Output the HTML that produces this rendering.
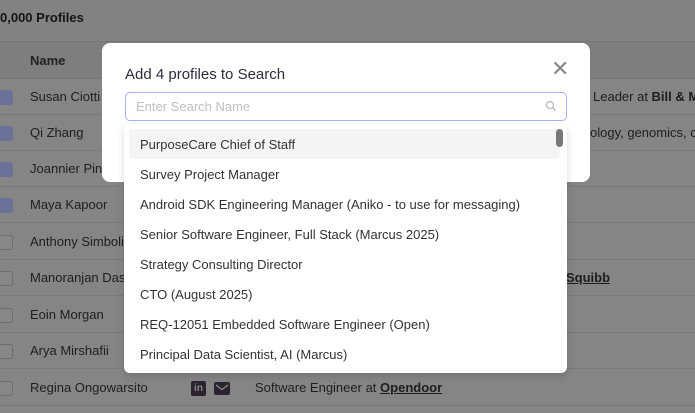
<!DOCTYPE html>
<html><head><style>
body{margin:0;width:695px;height:413px;overflow:hidden;background:#858585;font-family:"Liberation Sans",sans-serif;position:relative;color:#1c1c1c;white-space:nowrap}
.top{position:absolute;left:0;top:0;width:695px;height:41px;border-bottom:1px solid #767676;background:#828282}
.top span{position:absolute;left:0;top:10px;font-weight:bold;font-size:13px;color:#141414}
.hdr{position:absolute;left:0;top:42px;width:695px;height:36px;background:#7e7e7e;border-bottom:1px solid #777}
.hdr span{position:absolute;left:30px;top:11px;font-size:13px;font-weight:bold;color:#222}
.row{position:absolute;left:0;width:695px;height:35px;border-bottom:1px solid #7a7a7a}
.row .n{position:absolute;left:30px;top:10px;font-size:13px;color:#1e1e1e}
.cb{position:absolute;left:-2px;top:11px;width:13px;height:13px;border:1px solid #6d6d6d;border-radius:3px;background:#878787}
.cb.on{background:#6c7199;border-color:#6c7199}
.t{position:absolute;font-size:13px;color:#1e1e1e;top:10px}
.modal{position:absolute;left:102px;top:43px;width:488px;height:139px;background:#fff;border-radius:8px}
.modal h1{position:absolute;left:23px;top:23px;margin:0;font-size:15px;font-weight:normal;color:#2e2b3f}
.x{position:absolute;left:449px;top:13px;font-size:22px;color:#888;}
.inp{position:absolute;left:125px;top:92px;width:440px;height:27px;border:1px solid #a9b0f5;border-radius:5px;background:#fff}
.inp span{position:absolute;left:10px;top:6px;font-size:13px;color:#c0c0c0}
.dd{position:absolute;left:124px;top:124px;width:443px;height:249px;background:#fff;border-radius:6px;box-shadow:0 3px 8px rgba(0,0,0,.15)}
.it{position:absolute;left:5px;width:431px;height:30px;font-size:13px;color:#333;line-height:31px;text-indent:11px;border-radius:4px}
.sb{position:absolute;left:432px;top:5px;width:7px;height:18px;border-radius:4px;background:#777}
</style></head><body>
<div class="top"><span>0,000 Profiles</span></div>
<div class="hdr"><span>Name</span></div>
<div class="row" style="top:79px"><div class="cb on"></div><span class="n">Susan Ciotti</span><span class="t" style="left:593px">Leader at <b>Bill &amp; M</b></span></div>
<div class="row" style="top:115px"><div class="cb on"></div><span class="n">Qi Zhang</span><span class="t" style="left:590px">ology, genomics, c</span></div>
<div class="row" style="top:151px"><div class="cb on"></div><span class="n">Joannier Pina</span></div>
<div class="row" style="top:187px"><div class="cb on"></div><span class="n">Maya Kapoor</span></div>
<div class="row" style="top:224px"><div class="cb"></div><span class="n">Anthony Simboli</span></div>
<div class="row" style="top:260px"><div class="cb"></div><span class="n">Manoranjan Das</span><span class="t" style="left:566px;font-weight:bold;text-decoration:underline">Squibb</span></div>
<div class="row" style="top:297px"><div class="cb"></div><span class="n">Eoin Morgan</span></div>
<div class="row" style="top:333px"><div class="cb"></div><span class="n">Arya Mirshafii</span></div>
<div class="row" style="top:370px"><div class="cb"></div><span class="n">Regina Ongowarsito</span>
<div style="position:absolute;left:191px;top:11px;width:15px;height:15px;background:#2b2430;border-radius:2px;color:#888;font-size:10px;font-weight:bold;line-height:15px;text-align:center">in</div>
<svg style="position:absolute;left:214px;top:12px" width="16" height="13" viewBox="0 0 16 13"><rect width="16" height="13" rx="2" fill="#2b2430"/><path d="M2 3L8 7.5L14 3" stroke="#888" stroke-width="1.4" fill="none"/></svg>
<span class="t" style="left:255px">Software Engineer at <b style="text-decoration:underline">Opendoor</b></span></div>
<div class="modal"><h1>Add 4 profiles to Search</h1><span class="x">✕</span></div>
<div class="inp"><span>Enter Search Name</span>
<svg style="position:absolute;left:419px;top:7px" width="12" height="12" viewBox="0 0 12 12"><circle cx="5" cy="5" r="3.5" fill="none" stroke="#bbb" stroke-width="1.3"/><path d="M7.5 7.5L10.5 10.5" stroke="#bbb" stroke-width="1.5"/></svg></div>
<div class="dd">
<div class="it" style="top:5px;background:#f4f4f4">PurposeCare Chief of Staff</div>
<div class="it" style="top:35px">Survey Project Manager</div>
<div class="it" style="top:65px">Android SDK Engineering Manager (Aniko - to use for messaging)</div>
<div class="it" style="top:95px">Senior Software Engineer, Full Stack (Marcus 2025)</div>
<div class="it" style="top:125px">Strategy Consulting Director</div>
<div class="it" style="top:155px">CTO (August 2025)</div>
<div class="it" style="top:185px">REQ-12051 Embedded Software Engineer (Open)</div>
<div class="it" style="top:215px">Principal Data Scientist, AI (Marcus)</div>
<div class="sb"></div>
</div>
</body></html>
